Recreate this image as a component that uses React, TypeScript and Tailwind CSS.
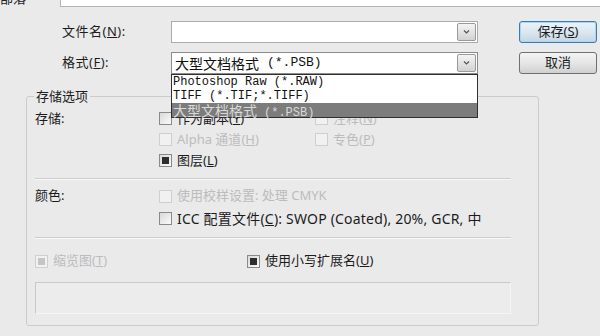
import React from "react";

const sans = "font-['Noto_Sans','Noto_Sans_CJK_SC',sans-serif]";
const mono = "font-['Liberation_Mono','Noto_Sans_CJK_SC',monospace]";

function Box({ checked, disabled }: { checked?: boolean; disabled?: boolean }) {
  return (
    <span
      className={
        disabled
          ? "w-[13px] h-[13px] border border-[#cfcfcf] bg-[#f1f1f1] flex items-center justify-center shrink-0"
          : "w-[13px] h-[13px] border border-[#8a8a8a] bg-gradient-to-br from-[#d9d9d9] to-[#fbfbfb] flex items-center justify-center shrink-0"
      }
    >
      {checked && (
        <span className={disabled ? "w-[7px] h-[7px] bg-[#c4c4c4]" : "w-[7px] h-[7px] bg-[#2e2e2e]"} />
      )}
    </span>
  );
}

function Check({
  label,
  mn,
  checked,
  disabled,
  className = "",
}: {
  label: string;
  mn?: string;
  checked?: boolean;
  disabled?: boolean;
  className?: string;
}) {
  return (
    <div className={`flex items-center gap-[5px] ${className}`}>
      <Box checked={checked} disabled={disabled} />
      <span className={disabled ? "text-[13px] text-[#bcbcbc]" : "text-[13px] text-[#1c1c1c]"}>
        {label}
        {mn && (
          <>
            (<u>{mn}</u>)
          </>
        )}
      </span>
    </div>
  );
}

function Arrow() {
  return (
    <div className="w-[19px] my-[1px] mr-[1px] border border-[#9a9a9a] rounded-[2px] bg-gradient-to-b from-[#f4f4f4] to-[#d2d2d2] flex items-center justify-center">
      <svg width="7" height="4" viewBox="0 0 7 4">
        <path d="M1 0.5 L3.5 3 L6 0.5" fill="none" stroke="#555" strokeWidth="1.2" />
      </svg>
    </div>
  );
}

export default function App() {
  return (
    <div className={`w-[600px] h-[336px] overflow-hidden bg-[#eaeaeb] relative ${sans}`}>
      {/* top strip, cut off */}
      <div className="flex h-[8px]">
        <div className="w-[60px] -mt-[10px] text-[13px] text-[#222] leading-[16px]">部落</div>
        <div className="flex-1 h-[7px] bg-white border-l border-b border-[#b5b5b5]" />
      </div>

      {/* name / format rows */}
      <div className="flex mt-[13px]">
        <div className="w-[171px] pl-[62px] flex flex-col gap-[9px] text-[13px] text-[#1c1c1c] tracking-[0.5px]">
          <div className="h-[22px] flex items-center">
            文件名(<u>N</u>):
          </div>
          <div className="h-[22px] flex items-center">
            格式(<u>F</u>):
          </div>
        </div>
        <div className="w-[307px] flex flex-col gap-[9px]">
          <div className="h-[22px] flex bg-white border border-[#ababab]">
            <div className="flex-1" />
            <Arrow />
          </div>
          <div className="h-[22px] flex bg-white border border-[#8c8c8c]">
            <div className={`flex-1 flex items-center pl-[3px] text-[#111] ${mono}`}>
              <span className="text-[14px] font-['Noto_Sans_CJK_SC',sans-serif]">大型文档格式</span>
              <span className="text-[13px] pl-[8px]">(*.PSB)</span>
            </div>
            <Arrow />
          </div>
        </div>
        <div className="ml-[41px] w-[78px] flex flex-col gap-[9px] text-[13px] text-[#1c1c1c]">
          <button className="h-[22px] border border-[#3d7bad] rounded-[3px] bg-gradient-to-b from-[#eaf3fa] via-[#dbe7f1] to-[#c6d6e4] shadow-[inset_0_0_0_1px_#a9d6f5]">
            保存(<u>S</u>)
          </button>
          <button className="h-[22px] border border-[#707070] rounded-[3px] bg-gradient-to-b from-[#f3f3f3] via-[#e6e6e6] to-[#d0d0d0]">
            取消
          </button>
        </div>
      </div>

      {/* options group */}
      <div className="mt-[22px] ml-[26px] w-[513px] h-[230px] border border-[#cbcbcb] rounded-[3px] relative">
        <div className="absolute -top-[9px] left-[7px] px-[2px] bg-[#eaeaeb] text-[13px] text-[#1c1c1c] leading-[16px]">
          存储选项
        </div>

        <div className="pt-[11px] pl-[8px] pr-[27px]">
          <div className="flex h-[21px] items-center">
            <div className="w-[124px] text-[13px] text-[#1c1c1c]">存储:</div>
            <Check label="作为副本" mn="Y" className="w-[156px]" />
            <Check label="注释" mn="N" disabled />
          </div>
          <div className="flex h-[21px] items-center">
            <div className="w-[124px]" />
            <Check label="Alpha 通道" mn="H" disabled className="w-[156px]" />
            <Check label="专色" mn="P" disabled />
          </div>
          <div className="flex h-[21px] items-center">
            <div className="w-[124px]" />
            <Check label="图层" mn="L" checked />
          </div>

          <div className="mt-[7px] h-[2px] border-t border-[#cdcdcd] border-b border-b-[#f8f8f8]" />

          <div className="flex h-[22px] items-center mt-[5px]">
            <div className="w-[124px] text-[13px] text-[#1c1c1c]">颜色:</div>
            <Check label="使用校样设置: 处理 CMYK" disabled />
          </div>
          <div className="flex h-[22px] items-center">
            <div className="w-[124px]" />
            <div className="flex items-center gap-[5px]">
              <Box />
              <span className="text-[14px] text-[#1c1c1c] tracking-[0.2px]">
                ICC 配置文件(<u>C</u>): SWOP (Coated), 20%, GCR, 中
              </span>
            </div>
          </div>

          <div className="mt-[8px] h-[2px] border-t border-[#cdcdcd] border-b border-b-[#f8f8f8]" />

          <div className="flex h-[22px] items-center mt-[11px]">
            <Check label="缩览图" mn="T" checked disabled className="w-[212px]" />
            <Check label="使用小写扩展名" mn="U" checked />
          </div>

          <div className="mt-[10px] h-[32px] border border-[#c9c9c9] border-b-[#f5f5f5] border-r-[#f5f5f5] bg-[#ececed]" />
        </div>
      </div>

      {/* open format list */}
      <div className={`absolute left-[171px] top-[74px] w-[307px] bg-white border border-[#2f2f2f] ${mono} text-[12px] text-[#111]`}>
        <div className="h-[14px] leading-[14px] pl-[1px]">Photoshop Raw (*.RAW)</div>
        <div className="h-[14px] leading-[14px] pl-[1px]">TIFF (*.TIF;*.TIFF)</div>
        <div className="h-[14px] leading-[14px] pl-[1px] bg-[#7c7c7c] text-[#d9d9d9]">
          <span className="text-[14px] font-['Noto_Sans_CJK_SC',sans-serif]">大型文档格式</span>
          <span className="pl-[7px]">(*.PSB)</span>
        </div>
      </div>
    </div>
  );
}
